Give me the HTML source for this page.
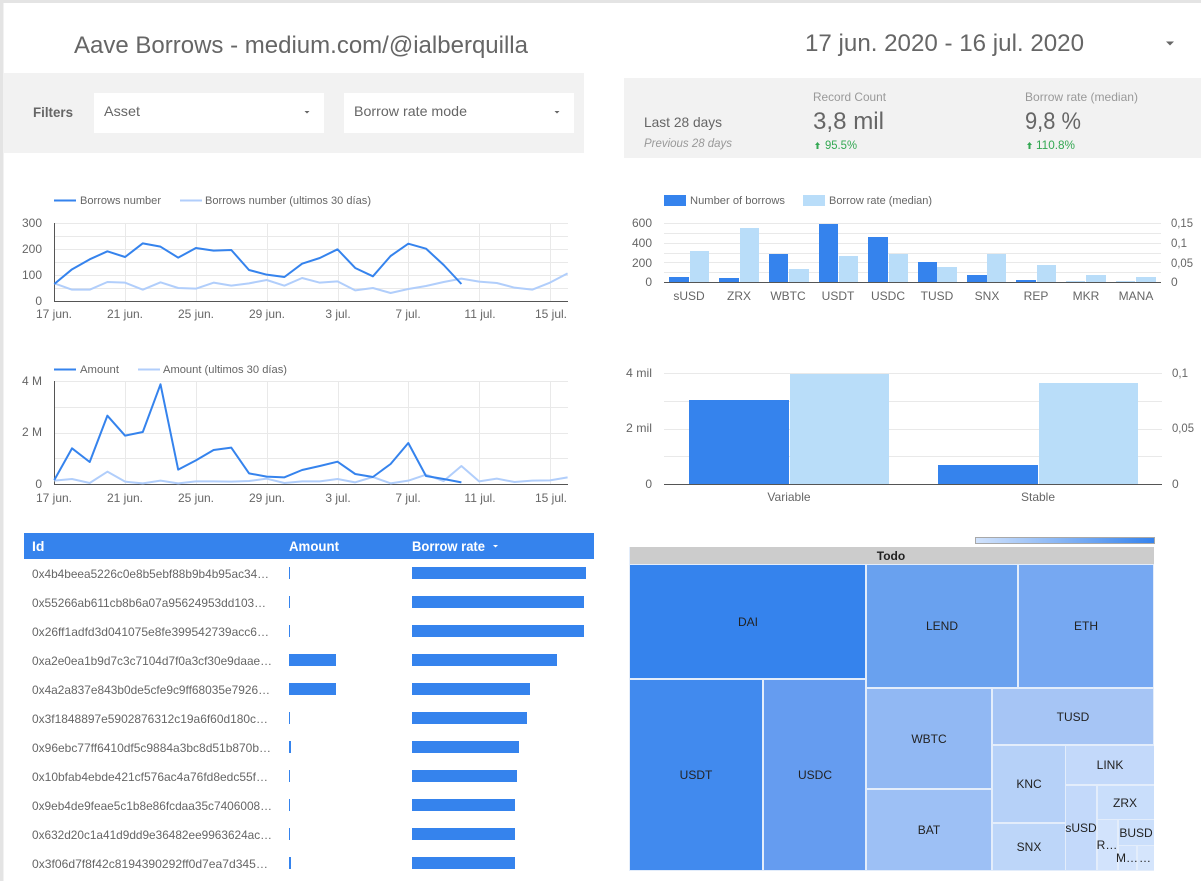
<!DOCTYPE html>
<html><head><meta charset="utf-8"><title>Aave Borrows</title>
<style>
html,body{margin:0;padding:0;background:#fff;width:1201px;height:881px;overflow:hidden}
svg{display:block;position:absolute;left:0;top:0}
text{font-family:"Liberation Sans",sans-serif;fill:#666}
.s11{font-size:11px}.s12{font-size:12px;fill:#666}
.g line{stroke:#e9e9e9;stroke-width:1}
.ax line{stroke:#555;stroke-width:1}
.d{fill:#3583ed}.l{fill:#b9ddf9}
.pd,.pl{fill:none;stroke-width:2;vector-effect:non-scaling-stroke;stroke-linejoin:round}
.pd{stroke:#3583ed}.pl{stroke:#b1cefb}
.tm text{font-size:12px;fill:#222;text-anchor:middle}
.tm rect{stroke:none}
.m{text-anchor:middle}.e{text-anchor:end}
</style></head><body>
<svg width="1201" height="881" viewBox="0 0 1201 881" xmlns="http://www.w3.org/2000/svg">
<rect x="0" y="0" width="1201" height="3" fill="#e4e4e4"/>
<rect x="0" y="0" width="3.5" height="881" fill="#e4e4e4"/>

<text x="74" y="53" font-size="24" textLength="454" lengthAdjust="spacingAndGlyphs">Aave Borrows - medium.com/@ialberquilla</text>
<text x="805" y="51" font-size="24" textLength="279" lengthAdjust="spacingAndGlyphs">17 jun. 2020 - 16 jul. 2020</text>
<path d="M1166 41.500h8l-4 4z" fill="#666"/>

<rect x="4" y="73" width="580" height="80" fill="#f2f2f2"/>
<text x="33" y="117" font-size="14" font-weight="bold" textLength="40" lengthAdjust="spacingAndGlyphs">Filters</text>
<rect x="94" y="93" width="230" height="40" fill="#fff"/>
<rect x="344" y="93" width="230" height="40" fill="#fff"/>
<text x="104" y="116" font-size="14" textLength="36" lengthAdjust="spacingAndGlyphs">Asset</text>
<text x="354" y="116" font-size="14" textLength="113" lengthAdjust="spacingAndGlyphs">Borrow rate mode</text>
<path d="M304.500 111h5l-2.500 2.500z M554.500 111h5l-2.500 2.500z" fill="#666"/>

<rect x="624" y="78" width="577" height="80" fill="#f2f2f2"/>
<text x="644" y="127" font-size="14" textLength="78" lengthAdjust="spacingAndGlyphs">Last 28 days</text>
<text x="644" y="147" font-size="12" font-style="italic" style="fill:#999" textLength="88" lengthAdjust="spacingAndGlyphs">Previous 28 days</text>
<text x="813" y="101" font-size="12" style="fill:#999" textLength="73" lengthAdjust="spacingAndGlyphs">Record Count</text>
<text x="813" y="129" font-size="24" textLength="71" lengthAdjust="spacingAndGlyphs">3,8 mil</text>
<path d="M817.500 142l2.500 3h-1.500v4h-2v-4h-1.500z" fill="#34a853"/>
<text x="825" y="149" font-size="12" style="fill:#34a853" textLength="32" lengthAdjust="spacingAndGlyphs">95.5%</text>
<text x="1025" y="101" font-size="12" style="fill:#999" textLength="113" lengthAdjust="spacingAndGlyphs">Borrow rate (median)</text>
<text x="1025" y="129" font-size="24" textLength="56" lengthAdjust="spacingAndGlyphs">9,8 %</text>
<path d="M1029.500 142l2.500 3h-1.500v4h-2v-4h-1.500z" fill="#34a853"/>
<text x="1036" y="149" font-size="12" style="fill:#34a853" textLength="39" lengthAdjust="spacingAndGlyphs">110.8%</text>

<!-- chart 1 -->
<line x1="54" y1="200.500" x2="76" y2="200.500" stroke="#3583ed" stroke-width="2"/>
<line x1="180" y1="200.500" x2="202" y2="200.500" stroke="#b1cefb" stroke-width="2"/>
<text x="80" y="204" class="s11" textLength="81" lengthAdjust="spacingAndGlyphs">Borrows number</text>
<text x="205" y="204" class="s11" textLength="166" lengthAdjust="spacingAndGlyphs">Borrows number (ultimos 30 días)</text>
<g class="g">
<line x1="54" x2="568" y1="223.500" y2="223.500"/><line x1="54" x2="568" y1="236.500" y2="236.500"/><line x1="54" x2="568" y1="249.500" y2="249.500"/><line x1="54" x2="568" y1="262.500" y2="262.500"/><line x1="54" x2="568" y1="275.500" y2="275.500"/><line x1="54" x2="568" y1="288.500" y2="288.500"/>
<line x1="125.500" x2="125.500" y1="223" y2="301"/><line x1="196.500" x2="196.500" y1="223" y2="301"/><line x1="267.500" x2="267.500" y1="223" y2="301"/><line x1="338.500" x2="338.500" y1="223" y2="301"/><line x1="408.500" x2="408.500" y1="223" y2="301"/><line x1="479.500" x2="479.500" y1="223" y2="301"/><line x1="550.500" x2="550.500" y1="223" y2="301"/>
</g>
<g class="ax"><line x1="54.500" x2="54.500" y1="223" y2="301.500"/><line x1="54" x2="568" y1="301.500" y2="301.500"/></g>
<g transform="translate(54.300,180) scale(17.7,0.33333)">
<polyline class="pl" points="0,310 1,329 2,329 3,306 4,308 5,329 6,307 7,324 8,326 9,308 10,317 11,310 12,300 13,317 14,294 15,308 16,304 17,331 18,324 19,339 20,327 21,318 22,306 23,296 24,305 25,309 26,323 27,329 28,308 29,280"/>
<polyline class="pd" points="0,312 1,268 2,238 3,214 4,231 5,190 6,200 7,233 8,204 9,212 10,210 11,270 12,284 13,291 14,251 15,234 16,208 17,264 18,289 19,228 20,191 21,206 22,255 23,312"/>
</g>
<text x="42" y="227" class="s12 e">300</text><text x="42" y="253" class="s12 e">200</text><text x="42" y="279" class="s12 e">100</text><text x="42" y="305" class="s12 e">0</text>
<g class="s12 m">
<text x="54" y="318">17 jun.</text><text x="125" y="318">21 jun.</text><text x="196" y="318">25 jun.</text><text x="267" y="318">29 jun.</text><text x="338" y="318">3 jul.</text><text x="408" y="318">7 jul.</text><text x="480" y="318">11 jul.</text><text x="551" y="318">15 jul.</text>
</g>

<!-- chart 2 -->
<line x1="54" y1="369.500" x2="76" y2="369.500" stroke="#3583ed" stroke-width="2"/>
<line x1="138" y1="369.500" x2="160" y2="369.500" stroke="#b1cefb" stroke-width="2"/>
<text x="80" y="373" class="s11" textLength="39" lengthAdjust="spacingAndGlyphs">Amount</text>
<text x="163" y="373" class="s11" textLength="124" lengthAdjust="spacingAndGlyphs">Amount (ultimos 30 días)</text>
<g class="g">
<line x1="54" x2="568" y1="381.500" y2="381.500"/><line x1="54" x2="568" y1="407.500" y2="407.500"/><line x1="54" x2="568" y1="433.500" y2="433.500"/><line x1="54" x2="568" y1="458.500" y2="458.500"/>
<line x1="125.500" x2="125.500" y1="381" y2="484"/><line x1="196.500" x2="196.500" y1="381" y2="484"/><line x1="267.500" x2="267.500" y1="381" y2="484"/><line x1="338.500" x2="338.500" y1="381" y2="484"/><line x1="408.500" x2="408.500" y1="381" y2="484"/><line x1="479.500" x2="479.500" y1="381" y2="484"/><line x1="550.500" x2="550.500" y1="381" y2="484"/>
</g>
<g class="ax"><line x1="54.500" x2="54.500" y1="381" y2="484.500"/><line x1="54" x2="568" y1="484.500" y2="484.500"/></g>
<g transform="translate(54.300,355) scale(17.7,0.33333)">
<polyline class="pl" points="0,377 1,372 2,384 3,350 4,380 5,385 6,377 7,385 8,379 9,379 10,380 11,378 12,371 13,384 14,379 15,379 16,372 17,382 18,366 19,385 20,377 21,359 22,378 23,333 24,379 25,371 26,381 27,377 28,376 29,367"/>
<polyline class="pd" points="0,375 1,280 2,321 3,182 4,242 5,231 6,88 7,344 8,316 9,285 10,278 11,355 12,365 13,367 14,345 15,333 16,320 17,357 18,366 19,327 20,264 21,363 22,372 23,382"/>
</g>
<text x="42" y="385" class="s12 e">4 M</text><text x="42" y="436" class="s12 e">2 M</text><text x="42" y="488" class="s12 e">0</text>
<g class="s12 m">
<text x="54" y="502">17 jun.</text><text x="125" y="502">21 jun.</text><text x="196" y="502">25 jun.</text><text x="267" y="502">29 jun.</text><text x="338" y="502">3 jul.</text><text x="408" y="502">7 jul.</text><text x="480" y="502">11 jul.</text><text x="551" y="502">15 jul.</text>
</g>

<!-- chart 3 -->
<rect x="664" y="195" width="22" height="11" class="d"/><rect x="803" y="195" width="22" height="11" class="l"/>
<text x="690" y="204" class="s11" textLength="95" lengthAdjust="spacingAndGlyphs">Number of borrows</text>
<text x="829" y="204" class="s11" textLength="103" lengthAdjust="spacingAndGlyphs">Borrow rate (median)</text>
<g class="g">
<line x1="664" x2="1161" y1="223.500" y2="223.500"/><line x1="664" x2="1161" y1="233.500" y2="233.500"/><line x1="664" x2="1161" y1="243.500" y2="243.500"/><line x1="664" x2="1161" y1="253.500" y2="253.500"/><line x1="664" x2="1161" y1="262.500" y2="262.500"/><line x1="664" x2="1161" y1="272.500" y2="272.500"/>
</g>
<rect class="d" x="669" y="277" width="20" height="5"/><rect class="l" x="690" y="251" width="19" height="31"/>
<rect class="d" x="719" y="278" width="20" height="4"/><rect class="l" x="740" y="228" width="19" height="54"/>
<rect class="d" x="769" y="254" width="19" height="28"/><rect class="l" x="789" y="269" width="20" height="13"/>
<rect class="d" x="819" y="224" width="19" height="58"/><rect class="l" x="839" y="256" width="19" height="26"/>
<rect class="d" x="868" y="237" width="20" height="45"/><rect class="l" x="889" y="254" width="19" height="28"/>
<rect class="d" x="918" y="262" width="19" height="20"/><rect class="l" x="937" y="267" width="20" height="15"/>
<rect class="d" x="967" y="275" width="20" height="7"/><rect class="l" x="987" y="254" width="19" height="28"/>
<rect class="d" x="1016" y="280" width="20" height="2"/><rect class="l" x="1037" y="265" width="19" height="17"/>
<rect class="l" x="1066" y="281" width="19" height="1"/><rect class="l" x="1086" y="275" width="20" height="7"/>
<rect class="l" x="1116" y="281" width="19" height="1"/><rect class="l" x="1136" y="277" width="20" height="5"/>
<g class="ax"><line x1="664" x2="1161" y1="282.500" y2="282.500"/></g>
<text x="652" y="227" class="s12 e">600</text><text x="652" y="247" class="s12 e">400</text><text x="652" y="267" class="s12 e">200</text><text x="652" y="286" class="s12 e">0</text>
<text x="1171" y="227" class="s12" textLength="22" lengthAdjust="spacingAndGlyphs">0,15</text><text x="1171" y="247" class="s12" textLength="16" lengthAdjust="spacingAndGlyphs">0,1</text><text x="1171" y="267" class="s12" textLength="22" lengthAdjust="spacingAndGlyphs">0,05</text><text x="1171" y="286" class="s12">0</text>
<g class="s12 m">
<text x="689" y="300">sUSD</text><text x="739" y="300">ZRX</text><text x="788" y="300">WBTC</text><text x="838" y="300">USDT</text><text x="888" y="300">USDC</text><text x="937" y="300">TUSD</text><text x="987" y="300">SNX</text><text x="1036" y="300">REP</text><text x="1086" y="300">MKR</text><text x="1136" y="300">MANA</text>
</g>

<!-- chart 4 -->
<g class="g">
<line x1="664" x2="1162" y1="373.500" y2="373.500"/><line x1="664" x2="1162" y1="401.500" y2="401.500"/><line x1="664" x2="1162" y1="429.500" y2="429.500"/><line x1="664" x2="1162" y1="456.500" y2="456.500"/>
</g>
<rect class="d" x="689" y="400" width="100" height="84"/><rect class="l" x="790" y="374" width="99" height="110"/>
<rect class="d" x="938" y="465" width="100" height="19"/><rect class="l" x="1039" y="383" width="99" height="101"/>
<g class="ax"><line x1="664" x2="1162" y1="484.500" y2="484.500"/></g>
<text x="652" y="377" class="s12 e" textLength="26" lengthAdjust="spacingAndGlyphs">4 mil</text><text x="652" y="432" class="s12 e" textLength="26" lengthAdjust="spacingAndGlyphs">2 mil</text><text x="652" y="488" class="s12 e">0</text>
<text x="1172" y="377" class="s12" textLength="16" lengthAdjust="spacingAndGlyphs">0,1</text><text x="1172" y="432" class="s12" textLength="22" lengthAdjust="spacingAndGlyphs">0,05</text><text x="1172" y="488" class="s12">0</text>
<text x="789" y="501" class="s12 m">Variable</text><text x="1038" y="501" class="s12 m">Stable</text>

<!-- table -->
<rect x="24" y="533" width="570" height="26" class="d"/>
<text x="32" y="551" font-size="14" font-weight="bold" style="fill:#fff">Id</text>
<text x="289" y="551" font-size="14" font-weight="bold" style="fill:#fff" textLength="50" lengthAdjust="spacingAndGlyphs">Amount</text>
<text x="412" y="551" font-size="14" font-weight="bold" style="fill:#fff" textLength="73" lengthAdjust="spacingAndGlyphs">Borrow rate</text>
<path d="M493 545h5l-2.500 2.500z" fill="#fff"/>
<g class="s12">
<text x="32" y="578" textLength="237" lengthAdjust="spacingAndGlyphs">0x4b4beea5226c0e8b5ebf88b9b4b95ac34…</text>
<text x="32" y="607" textLength="234" lengthAdjust="spacingAndGlyphs">0x55266ab611cb8b6a07a95624953dd103…</text>
<text x="32" y="636" textLength="237" lengthAdjust="spacingAndGlyphs">0x26ff1adfd3d041075e8fe399542739acc6…</text>
<text x="32" y="665" textLength="240" lengthAdjust="spacingAndGlyphs">0xa2e0ea1b9d7c3c7104d7f0a3cf30e9daae…</text>
<text x="32" y="694" textLength="238" lengthAdjust="spacingAndGlyphs">0x4a2a837e843b0de5cfe9c9ff68035e7926…</text>
<text x="32" y="723" textLength="236" lengthAdjust="spacingAndGlyphs">0x3f1848897e5902876312c19a6f60d180c…</text>
<text x="32" y="752" textLength="239" lengthAdjust="spacingAndGlyphs">0x96ebc77ff6410df5c9884a3bc8d51b870b…</text>
<text x="32" y="781" textLength="236" lengthAdjust="spacingAndGlyphs">0x10bfab4ebde421cf576ac4a76fd8edc55f…</text>
<text x="32" y="810" textLength="240" lengthAdjust="spacingAndGlyphs">0x9eb4de9feae5c1b8e86fcdaa35c7406008…</text>
<text x="32" y="839" textLength="240" lengthAdjust="spacingAndGlyphs">0x632d20c1a41d9dd9e36482ee9963624ac…</text>
<text x="32" y="868" textLength="236" lengthAdjust="spacingAndGlyphs">0x3f06d7f8f42c8194390292ff0d7ea7d345…</text>
</g>
<g class="d">
<rect x="289" y="567" width="1" height="12"/><rect x="412" y="567" width="174" height="12"/>
<rect x="289" y="596" width="1" height="12"/><rect x="412" y="596" width="172" height="12"/>
<rect x="289" y="625" width="1" height="12"/><rect x="412" y="625" width="172" height="12"/>
<rect x="289" y="654" width="47" height="12"/><rect x="412" y="654" width="145" height="12"/>
<rect x="289" y="683" width="47" height="12"/><rect x="412" y="683" width="118" height="12"/>
<rect x="289" y="712" width="1" height="12"/><rect x="412" y="712" width="115" height="12"/>
<rect x="289" y="741" width="2" height="12"/><rect x="412" y="741" width="107" height="12"/>
<rect x="289" y="770" width="1" height="12"/><rect x="412" y="770" width="105" height="12"/>
<rect x="289" y="799" width="1" height="12"/><rect x="412" y="799" width="103" height="12"/>
<rect x="289" y="828" width="1" height="12"/><rect x="412" y="828" width="103" height="12"/>
<rect x="289" y="857" width="2" height="12"/><rect x="412" y="857" width="103" height="12"/>
</g>

<!-- treemap -->
<defs><linearGradient id="lg"><stop offset="0" stop-color="#d2e3fc"/><stop offset="1" stop-color="#3583ed"/></linearGradient></defs>
<rect x="975.500" y="537.500" width="179" height="6" fill="url(#lg)" stroke="#a8a8a8"/>
<g class="tm">
<rect x="629" y="547" width="525" height="324" fill="#e3edfb"/>
<rect x="630" y="547" width="524" height="17" fill="#cccccc"/>
<text x="891" y="560" font-weight="bold" style="font-weight:bold">Todo</text>
<rect x="630" y="565" width="235" height="113" fill="#3583ed"/><text x="748" y="626">DAI</text>
<rect x="630" y="680" width="132" height="190" fill="#418aee"/><text x="696" y="779">USDT</text>
<rect x="764" y="680" width="101" height="190" fill="#659cf0"/><text x="815" y="779">USDC</text>
<rect x="867" y="565" width="150" height="122" fill="#69a1ef"/><text x="942" y="630">LEND</text>
<rect x="1019" y="565" width="134" height="122" fill="#76a8f2"/><text x="1086" y="630">ETH</text>
<rect x="867" y="689" width="124" height="99" fill="#91b8f3"/><text x="929" y="743">WBTC</text>
<rect x="867" y="790" width="124" height="80" fill="#9dc0f5"/><text x="929" y="834">BAT</text>
<rect x="993" y="689" width="160" height="55" fill="#a6c5f5"/><text x="1073" y="721">TUSD</text>
<rect x="993" y="746" width="72" height="76" fill="#b6d1f8"/><text x="1029" y="788">KNC</text>
<rect x="993" y="824" width="72" height="46" fill="#bdd6f9"/><text x="1029" y="851">SNX</text>
<rect x="1066" y="746" width="88" height="38" fill="#c3d9fa"/><text x="1110" y="769">LINK</text>
<rect x="1066" y="786" width="30" height="84" fill="#c3d9fa"/><text x="1081" y="832">sUSD</text>
<rect x="1098" y="786" width="56" height="33" fill="#c9defb"/><text x="1125" y="807">ZRX</text>
<rect x="1098" y="820" width="19" height="50" fill="#d2e3fc"/><text x="1107" y="849">R…</text>
<rect x="1119" y="820" width="35" height="25" fill="#cbdffb"/><text x="1136" y="837">BUSD</text>
<rect x="1119" y="846" width="17" height="24" fill="#d2e3fc"/><text x="1127" y="862">M…</text>
<rect x="1138" y="846" width="16" height="24" fill="#d5e5fc"/><text x="1145" y="862">…</text>
</g>
</svg>
</body></html>
